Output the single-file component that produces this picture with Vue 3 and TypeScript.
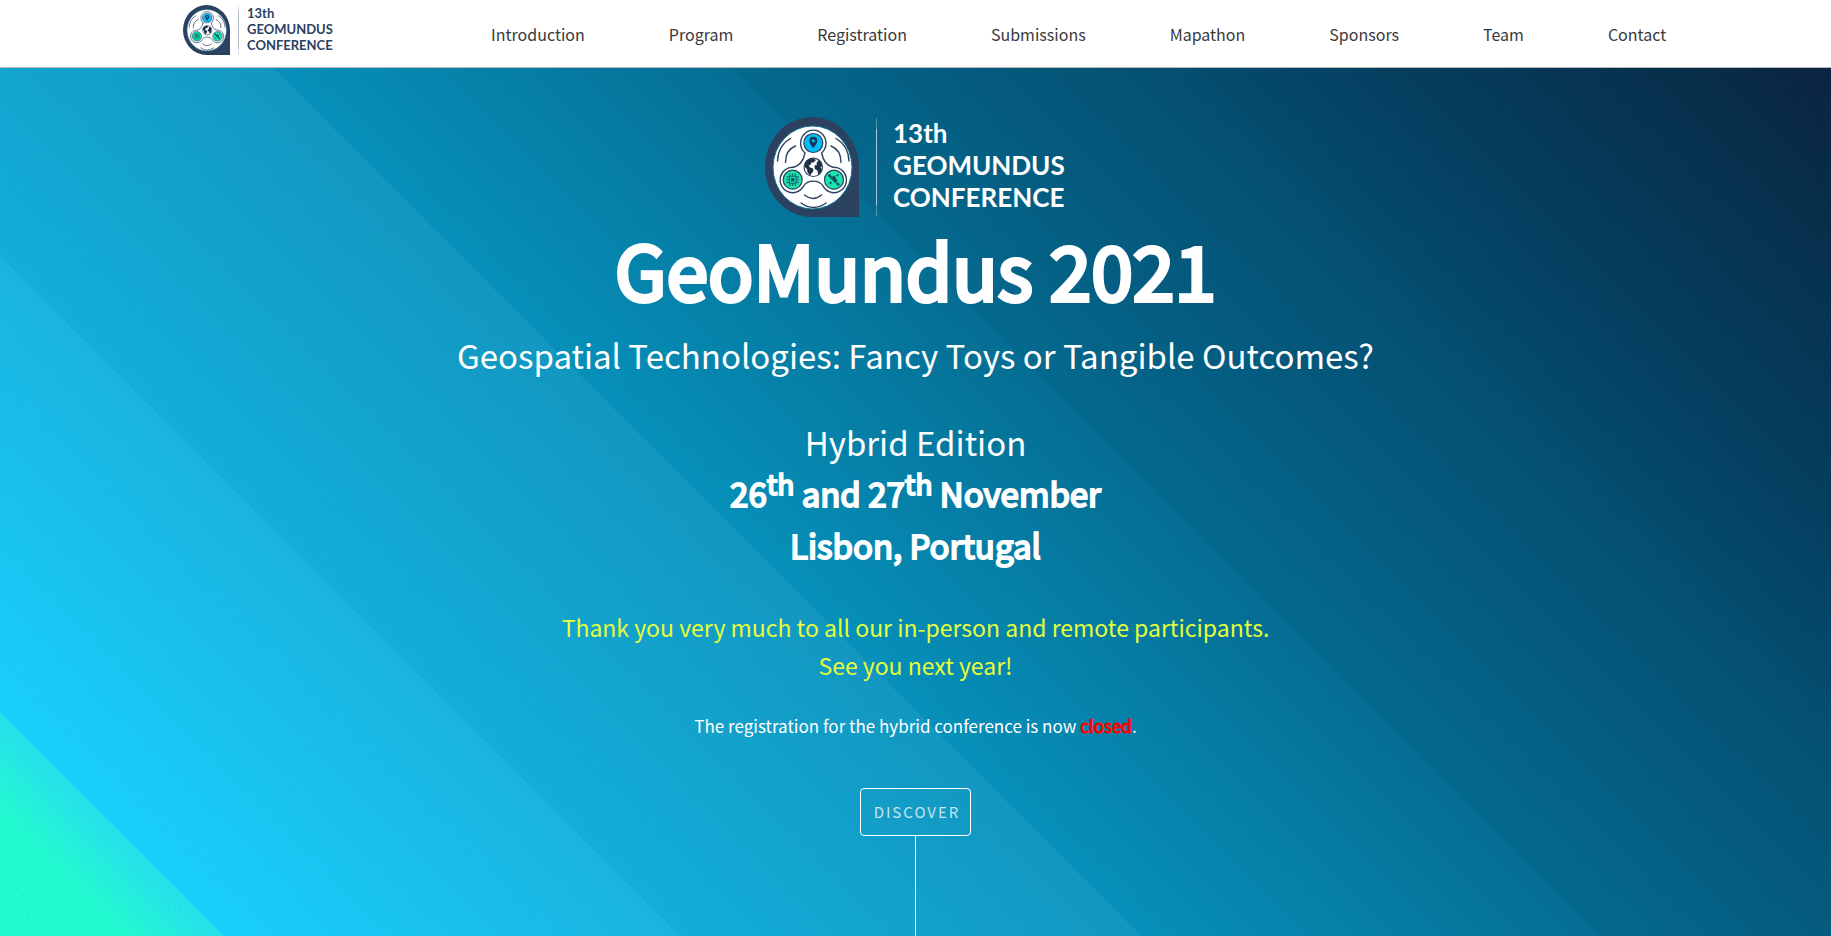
<script setup lang="ts">
interface NavItem {
  label: string
  href: string
}

const navItems: NavItem[] = [
  { label: 'Introduction', href: '#introduction' },
  { label: 'Program', href: '#program' },
  { label: 'Registration', href: '#registration' },
  { label: 'Submissions', href: '#submissions' },
  { label: 'Mapathon', href: '#mapathon' },
  { label: 'Sponsors', href: '#sponsors' },
  { label: 'Team', href: '#team' },
  { label: 'Contact', href: '#contact' },
]
</script>

<template>
  <div class="page">
    <header class="header">
      <a class="brand" href="#banner" aria-label="13th GeoMundus Conference">
        <svg class="brand-logo" viewBox="0 0 300 100" aria-hidden="true">
          <defs>
            <symbol id="conference-logo" viewBox="0 0 300 100">
              <path d="M47 0A47 50 0 0 0 0 50A47 50 0 0 0 47 100H94V50A47 50 0 0 0 47 0Z" fill="#2c415f" />
              <ellipse cx="47.5" cy="50.5" rx="39.5" ry="41.5" fill="#fff" stroke="#15799b" stroke-width="1" />
              <g fill="none" stroke="#2c415f" stroke-width="1.4" stroke-linecap="round">
                <path d="M40 36A12.7 13 0 1 1 56.6 36C58 43 61 48.500 68 50.300A12.500 12.700 0 1 1 58 69C54 62.500 42.600 62.500 38.600 69A12.500 12.700 0 1 1 28.600 50.300C35.600 48.500 38.600 43 40 36Z" />
                <path d="M12.500 44C13 34 17.500 26 25.500 21.500M20.500 45.500C20.500 37 24 31.500 30.500 29M84 44C83.500 34 79 26 71 21.500M76 45.500C76 37 72.500 31.500 66 29M39.500 78Q48.300 85 56.500 78M36 86Q48.300 95 61 86" />
              </g>
              <g stroke="#2c415f" stroke-width="1.200">
                <circle cx="48.300" cy="26" r="9.500" fill="#00bff8" />
                <circle cx="27.700" cy="62.700" r="9.500" fill="#19e5ae" />
                <circle cx="69" cy="62.700" r="9.500" fill="#19e5ae" />
                <circle cx="48.300" cy="50.300" r="9.200" fill="#fff" />
              </g>
              <path d="M48.300 31.500C45.500 27.500 44.300 26 44.300 23.800a4 4 0 0 1 8 0C52.300 26 51 27.500 48.300 31.500ZM48.300 22.200a1.600 1.600 0 1 0 0 3.200a1.600 1.600 0 0 0 0-3.200Z" fill="#173455" fill-rule="evenodd" />
              <path d="M40 47C41 43.500 44 41.500 48 41.500L51 43L48.500 45.500L46 45.800L45.500 48L43.500 48.500L45 50.500L48 51.500L48.500 54L46 57L45.500 59L42.500 55.500L42 52L39.800 50ZM51.500 46L53.500 43.300L56 45L57.500 49L55.500 50L57 53L55 56.500L53 57.500L52.500 53.500L49.800 52L49.500 48.500L52 47.800Z" fill="#1d3047" />
              <g fill="none" stroke="#154f63" stroke-width="1">
                <rect x="24.200" y="59.200" width="7" height="7" />
                <path d="M25 56.500v2M27.700 56.500v2M30.400 56.500v2M25 67v2M27.700 67v2M30.400 67v2M21.500 60h2M21.500 62.700h2M21.500 65.400h2M32 60h2M32 62.700h2M32 65.400h2" />
              </g>
              <rect x="26" y="61" width="3.400" height="3.400" fill="#154f63" />
              <g fill="#154f63">
                <path d="M67.500 59.500l2-1 3 5.500-2 2-2-1.500-1-1.500-2-1 .5-2z" />
                <path d="M62.500 58l2.500-1 2 3-2.500 1zM70.500 66.500l2.500-1 2 2-2 1.500zM71 58.500l1.500-1.500 1.500 1-1.500 1.500zM64 66l1.500-1.500 1.500 1-1.500 2z" />
              </g>
              <g fill="currentColor">
                <rect x="111" y="1" width="1" height="98" opacity="0.3" />
                <rect x="111" y="12" width="1" height="76" opacity="0.5" />
              </g>
              <g class="logo-text" fill="currentColor">
                <text x="128" y="26">13th</text>
                <text x="128" y="57.500">GEOMUNDUS</text>
                <text x="128" y="90">CONFERENCE</text>
              </g>
            </symbol>
          </defs>
          <use href="#conference-logo" width="300" height="100" />
        </svg>
      </a>
      <nav class="nav" aria-label="Main">
        <ul>
          <li v-for="item in navItems" :key="item.label">
            <a :href="item.href">{{ item.label }}</a>
          </li>
        </ul>
      </nav>
    </header>

    <section id="banner" class="banner">
      <svg class="grain" aria-hidden="true">
        <filter id="grain-noise">
          <feTurbulence type="fractalNoise" baseFrequency="0.5" numOctaves="2" />
          <feColorMatrix values="0 0 0 0 0  0 0 0 0 0.2  0 0 0 0 0.3  1.500 0 0 0 -0.500" />
        </filter>
        <rect width="100%" height="100%" filter="url(#grain-noise)" />
      </svg>
      <div class="content">
        <svg class="hero-logo" viewBox="0 0 300 100" role="img" aria-label="13th GeoMundus Conference">
          <use href="#conference-logo" width="300" height="100" />
        </svg>
        <h1>GeoMundus 2021</h1>
        <p class="lead">Geospatial Technologies: Fancy Toys or Tangible Outcomes?</p>
        <p class="lead edition">Hybrid Edition</p>
        <p class="lead strong">26<sup>th</sup> and 27<sup>th</sup> November</p>
        <p class="lead strong">Lisbon, Portugal</p>
        <p class="thanks">
          Thank you very much to all our in-person and remote participants.<br />See you next year!
        </p>
        <p class="notice">The registration for the hybrid conference is now <b>closed</b>.</p>
      </div>
      <a class="discover" href="#introduction">DISCOVER</a>
      <div class="stem"></div>
    </section>
  </div>
</template>

<style>
body {
  margin: 0;
}
</style>

<style scoped>
.page {
  min-height: 100vh;
  display: flex;
  flex-direction: column;
  font-family: "Noto Sans CJK SC", "Noto Sans", sans-serif;
  color: #fff;
}

.header {
  box-sizing: border-box;
  height: 68px;
  padding: 0 9% 0 10%;
  display: flex;
  justify-content: space-between;
  background: #fff;
  border-bottom: 1px solid #b5b9bb;
}

.brand {
  color: #2c415f;
  padding-top: 5px;
}

.brand-logo {
  display: block;
  width: 150px;
  height: 50px;
}

.logo-text {
  font-family: Lato, sans-serif;
  font-size: 26px;
  font-weight: 700;
}

.nav ul {
  display: flex;
  gap: 84px;
  margin: 0;
  padding: 0;
  list-style: none;
}

.nav a {
  font-size: 16px;
  line-height: 68px;
  color: #39393c;
  text-decoration: none;
}

.banner {
  position: relative;
  flex: 1;
  display: flex;
  flex-direction: column;
  align-items: center;
  background: linear-gradient(
    45deg,
    #24ffd0 0%,
    #24ffd0 4.5%,
    #28e2f0 8.3%,
    #1ad2ff 8.3%,
    #1bb5e1 25.2%,
    #13b0db 25.2%,
    #1398c2 42.3%,
    #0791bb 42.3%,
    #066d93 59.3%,
    #06698f 59.3%,
    #055a7e 67.8%,
    #054d6f 76.3%,
    #054b6c 76.3%,
    #063c5d 84%,
    #082d49 94%,
    #0d2140 100%
  );
}

.grain {
  position: absolute;
  inset: 0;
  width: 100%;
  height: 100%;
  opacity: 0.12;
  pointer-events: none;
}

.content {
  position: relative;
  padding-top: 49px;
  text-align: center;
}

.hero-logo {
  display: block;
  width: 300px;
  height: 100px;
  margin: 0 auto;
}

h1 {
  margin: 4px 0 12px;
  font-size: 75px;
  line-height: 96px;
  font-weight: 400;
  -webkit-text-stroke: 4px #fff;
}

p {
  margin: 0;
}

.lead {
  font-size: 33px;
  line-height: 52px;
}

.edition {
  margin-top: 36px;
  line-height: 50px;
}

.strong {
  -webkit-text-stroke: 2px #fff;
}

.lead sup {
  font-size: 28px;
  line-height: 0;
}

.thanks {
  margin-top: 37px;
  font-size: 23px;
  line-height: 38px;
  color: #e6ff3a;
}

.notice {
  margin-top: 25px;
  font-size: 17px;
  line-height: 34px;
}

.notice b {
  font-weight: 400;
  color: #f00;
  -webkit-text-stroke: 1px #f00;
}

.discover {
  position: relative;
  box-sizing: border-box;
  margin-top: 45px;
  height: 48px;
  padding: 0 10px 0 13px;
  border: 1px solid #fff;
  border-radius: 4px;
  font-size: 15px;
  line-height: 46px;
  letter-spacing: 2px;
  color: rgba(255, 255, 255, 0.75);
  text-decoration: none;
}

.stem {
  position: relative;
  flex: 1;
  min-height: 100px;
  width: 1px;
  background: #fff;
}
</style>
